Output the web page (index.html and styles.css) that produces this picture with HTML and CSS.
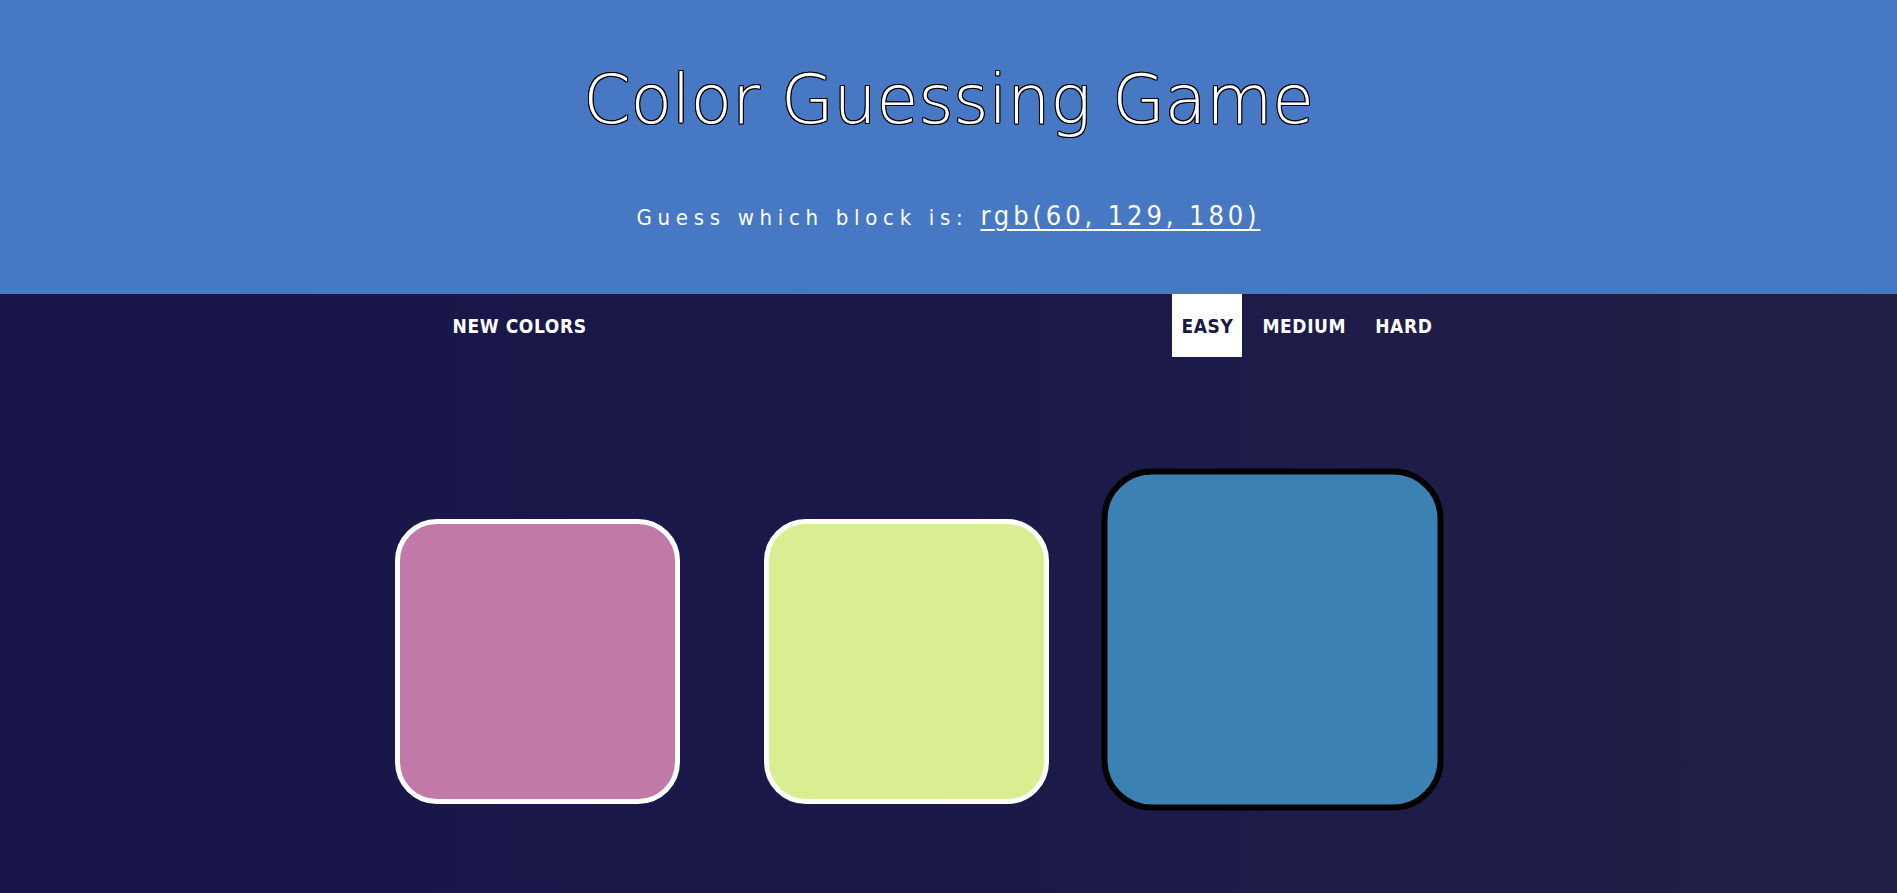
FILE: index.html
```html
<!DOCTYPE html>
<html lang="en">
<head>
<meta charset="utf-8">
<title>Color Guessing Game</title>
<link rel="stylesheet" href="styles.css">
</head>
<body>
<header class="header">
  <h1 class="title">Color Guessing Game</h1>
  <p class="prompt">Guess which block is: <span class="target">rgb(60, 129, 180)</span></p>
</header>
<nav class="nav">
  <button class="btn btn-new">NEW COLORS</button>
  <div class="modes">
    <button class="btn mode active">EASY</button>
    <button class="btn mode">MEDIUM</button>
    <button class="btn mode">HARD</button>
  </div>
</nav>
<main class="board">
  <div class="square" style="background:#c17aa7"></div>
  <div class="square" style="background:#d8ee90"></div>
  <div class="square square-hover" style="background:#3c81b4"></div>
</main>
</body>
</html>
```
FILE: styles.css
```css
* { box-sizing: border-box; }
html, body { margin: 0; padding: 0; }
body {
  min-height: 893px;
  background: linear-gradient(to right, #181649 0%, #1b1949 50%, #222047 100%);
  font-family: "DejaVu Sans", "Liberation Sans", sans-serif;
  font-stretch: condensed;
  color: #fff;
  overflow: hidden;
}
.header {
  background: #4678c4;
  height: 294px;
  text-align: center;
  padding-top: 60px;
}
.title {
  margin: 0;
  font-family: "DejaVu Sans", sans-serif;
  font-weight: 200;
  font-size: 68px;
  line-height: 80px;
  letter-spacing: -0.2px;
  color: #fff;
  text-shadow: 1px 1px 0 #000, -1px -1px 0 #000, 1px -1px 0 #000, -1px 1px 0 #000, 0 1px 0 #000, 0 -1px 0 #000, 1px 0 0 #000, -1px 0 0 #000;
}
.prompt {
  margin: 61px 0 0;
  font-size: 22px;
  font-stretch: condensed;
  letter-spacing: 5.7px;
  line-height: 30px;
}
.target {
  font-size: 27px;
  text-decoration: underline;
  text-underline-offset: 4px;
  text-decoration-thickness: 2px;
  letter-spacing: 3.9px;
}
.nav {
  width: 1138px;
  height: 63px;
  margin: 0 auto;
  display: flex;
  justify-content: space-between;
  align-items: stretch;
}
.btn {
  border: 0;
  background: transparent;
  color: #fff;
  font-family: "DejaVu Sans", sans-serif;
  font-stretch: condensed;
  font-weight: 700;
  font-size: 19px;
  letter-spacing: 0.6px;
  padding: 0 9px;
  cursor: pointer;
}
.btn-new { margin-left: 64px; }
.modes {
  display: flex;
  gap: 11px;
  margin-right: 76px;
}
.mode.active {
  background: #fff;
  color: #1a1847;
}
.board {
  width: 1138px;
  margin: 162px auto 0;
  padding-left: 15px;
  display: flex;
  gap: 84px;
}
.square {
  width: 285px;
  height: 285px;
  border: 5px solid #fff;
  border-radius: 42px;
}
.square-hover {
  border-color: #000;
  transform: translate(-3px, -22px) scale(1.2);
}
```
